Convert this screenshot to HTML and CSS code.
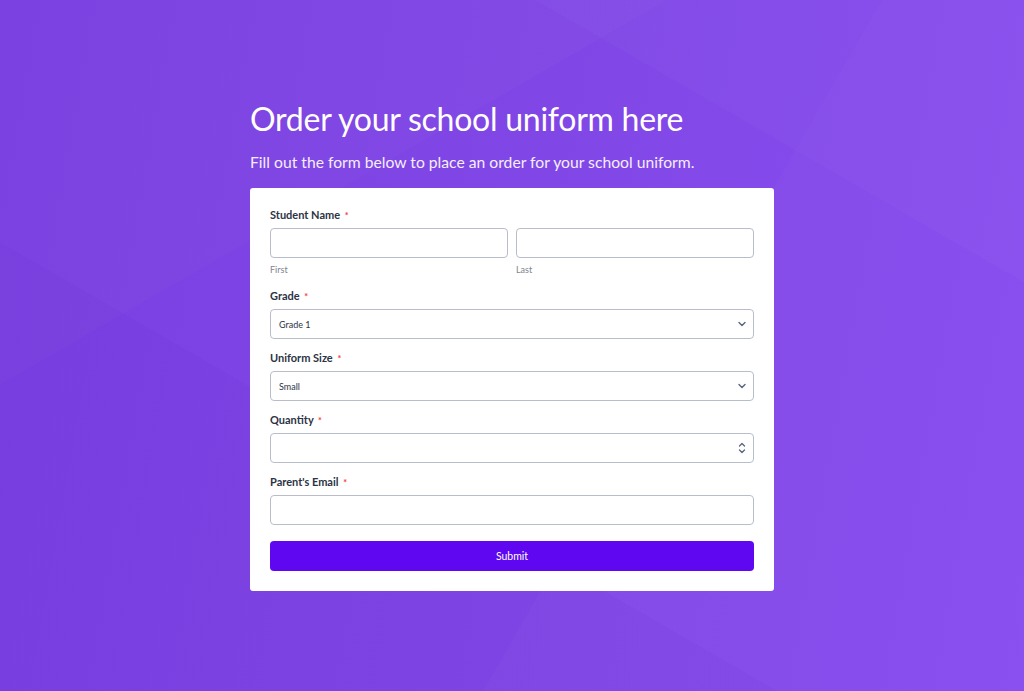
FILE: index.html
```html
<!DOCTYPE html>
<html lang="en">
<head>
    <meta charset="UTF-8">
    <meta name="viewport" content="width=device-width, initial-scale=1.0">
    <title>School Uniform Order</title>
    <link rel="stylesheet" href="styles.css">
</head>
<body>
    <div class="page">
        <div class="wrap">
            <h1 class="title">Order your school uniform here</h1>
            <p class="subtitle">Fill out the form below to place an order for your school uniform.</p>

            <form class="card" onsubmit="return false;">
                <div class="field">
                    <label class="label">Student Name <span class="req">*</span></label>
                    <div class="name-row">
                        <div class="name-col">
                            <input type="text" class="input">
                            <span class="sublabel">First</span>
                        </div>
                        <div class="name-col">
                            <input type="text" class="input">
                            <span class="sublabel">Last</span>
                        </div>
                    </div>
                </div>

                <div class="field">
                    <label class="label">Grade <span class="req">*</span></label>
                    <div class="control">
                        <select class="input select">
                            <option>Grade 1</option>
                            <option>Grade 2</option>
                            <option>Grade 3</option>
                        </select>
                        <svg class="icon" width="10" height="10" viewBox="0 0 10 10"><path d="M2 3.5 L5 6.5 L8 3.5" fill="none" stroke="#57647e" stroke-width="1.4" stroke-linecap="round" stroke-linejoin="round"/></svg>
                    </div>
                </div>

                <div class="field">
                    <label class="label">Uniform Size <span class="req">*</span></label>
                    <div class="control">
                        <select class="input select">
                            <option>Small</option>
                            <option>Medium</option>
                            <option>Large</option>
                        </select>
                        <svg class="icon" width="10" height="10" viewBox="0 0 10 10"><path d="M2 3.5 L5 6.5 L8 3.5" fill="none" stroke="#57647e" stroke-width="1.4" stroke-linecap="round" stroke-linejoin="round"/></svg>
                    </div>
                </div>

                <div class="field">
                    <label class="label">Quantity <span class="req">*</span></label>
                    <div class="control">
                        <input type="number" class="input number">
                        <svg class="icon" width="10" height="14" viewBox="0 0 10 14"><path d="M2.5 5 L5 2.5 L7.5 5 M2.5 9 L5 11.5 L7.5 9" fill="none" stroke="#57647e" stroke-width="1.3" stroke-linecap="round" stroke-linejoin="round"/></svg>
                    </div>
                </div>

                <div class="field">
                    <label class="label">Parent's Email <span class="req">*</span></label>
                    <input type="email" class="input">
                </div>

                <button type="submit" class="submit">Submit</button>
            </form>
        </div>
    </div>
</body>
</html>
```

FILE: styles.css
```css
body {
    margin: 0;
    font-family: Lato, "Open Sans", sans-serif;
    background-color: #8249e7;
}

.page {
    min-height: 691px;
    background-color: #8249e7;
    background-image:
        linear-gradient(150deg, rgba(255, 255, 255, 0.015) 0 30%, transparent 30%),
        linear-gradient(210deg, rgba(255, 255, 255, 0.02) 0 22%, transparent 22%),
        linear-gradient(30deg, rgba(60, 0, 160, 0.04) 0 35%, transparent 35%),
        linear-gradient(120deg, transparent 0 62%, rgba(255, 255, 255, 0.015) 62%),
        linear-gradient(100deg, #7a3fe1 0%, #8147e6 50%, #884df0 100%);
    display: flex;
    justify-content: center;
}

.wrap {
    width: 524px;
    padding-top: 98px;
}

.title {
    margin: 0;
    color: #fff;
    font-weight: 400;
    font-size: 32px;
    line-height: 42px;
    letter-spacing: -0.25px;
}

.subtitle {
    margin: 12px 0 16px;
    color: #f4eefe;
    font-size: 15.7px;
    line-height: 20px;
}

.card {
    background: #fff;
    border-radius: 3px;
    padding: 20px 20px 20px;
    display: flex;
    flex-direction: column;
    gap: 12px;
}

.field {
    display: flex;
    flex-direction: column;
}

.label {
    font-size: 11px;
    font-weight: 700;
    line-height: 14px;
    color: #2c3345;
    margin-bottom: 5px;
}

.req {
    color: #f23a3c;
    font-size: 9px;
    margin-left: 2px;
}

.name-row {
    display: flex;
    gap: 8px;
}

.name-col {
    flex: 1;
    display: flex;
    flex-direction: column;
}

.sublabel {
    font-size: 9px;
    line-height: 14px;
    color: #80858f;
    margin-top: 5px;
}

.input {
    box-sizing: border-box;
    width: 100%;
    height: 30px;
    border: 1px solid #b8bdc9;
    border-radius: 4px;
    background: #fff;
    font-family: Lato, sans-serif;
    font-size: 9px;
    color: #2c3345;
    padding: 0 8px;
    outline: none;
}

.control {
    position: relative;
}

.select {
    appearance: none;
    -webkit-appearance: none;
}

.number::-webkit-inner-spin-button,
.number::-webkit-outer-spin-button {
    -webkit-appearance: none;
    margin: 0;
}

.icon {
    position: absolute;
    right: 7px;
    top: 50%;
    transform: translateY(-50%);
    pointer-events: none;
}

.submit {
    margin-top: 4px;
    height: 30px;
    border: none;
    border-radius: 4px;
    background-color: #5f07f0;
    color: #fff;
    font-family: Lato, sans-serif;
    font-size: 10.5px;
    cursor: pointer;
}
```
